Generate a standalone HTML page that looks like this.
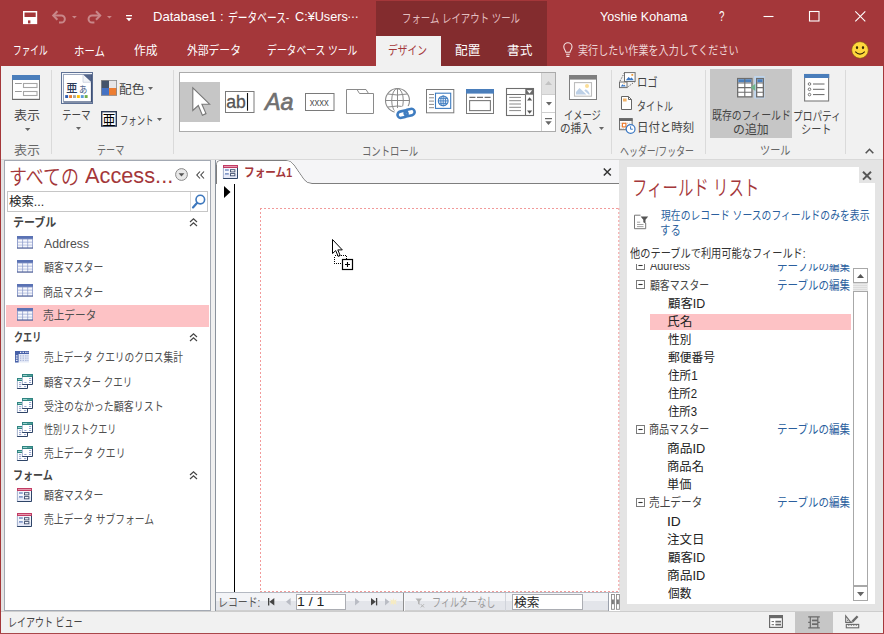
<!DOCTYPE html><html lang="ja"><head><meta charset="utf-8"><title>Access - フォーム1</title><style>
*{box-sizing:border-box;margin:0;padding:0}
html,body{width:884px;height:634px;overflow:hidden;background:#E4E4E4}
body{font-family:"Liberation Sans","Noto Sans CJK JP",sans-serif;font-size:12px;color:#444}
#app{position:relative;width:884px;height:634px;overflow:hidden;background:#E4E4E4}
.a{position:absolute}
.t{position:absolute;white-space:nowrap;transform-origin:0 50%;display:inline-block}
svg{position:absolute;overflow:visible}
#tree{position:absolute;left:627px;top:264px;width:248px;height:340px;overflow:hidden}
</style></head><body><div id="app"><div class="a" style="left:0px;top:0px;width:884px;height:66px;background:#A4373A;"></div><div class="a" style="left:376px;top:1px;width:171px;height:65px;background:#832C2E;"></div><div class="a" style="left:376px;top:36px;width:65px;height:30px;background:#F1F1F1;"></div><svg style="left:23px;top:11px" width="14" height="13" viewBox="0 0 14 13"><rect x="0.75" y="0.75" width="12.7" height="11.6" fill="none" stroke="#fff" stroke-width="1.5"/><rect x="1" y="6" width="12.2" height="6.6" fill="#fff"/><rect x="5" y="9.4" width="2.4" height="3" fill="#A4373A"/></svg><svg style="left:52px;top:11.2px" width="15" height="13" viewBox="0 0 15 13"><path d="M1.2 4.5H9.3A3.55 3.55 0 0 1 9.3 11.6H7" fill="none" stroke="#C98789" stroke-width="2"/><path d="M5.4 0.2L1.2 4.5L5.4 8.8" fill="none" stroke="#C98789" stroke-width="2"/></svg><svg style="left:72.2px;top:16.3px" width="4.8" height="2.6" viewBox="0 0 4.8 2.6"><path d="M0 0H4.8L2.4 2.6Z" fill="#C98789"/></svg><svg style="left:87px;top:11.2px" width="15" height="13" viewBox="0 0 15 13"><path d="M13.2 4.5H5.1A3.55 3.55 0 0 0 5.1 11.6H7.4" fill="none" stroke="#C98789" stroke-width="2"/><path d="M9 0.2L13.2 4.5L9 8.8" fill="none" stroke="#C98789" stroke-width="2"/></svg><svg style="left:107.2px;top:16.3px" width="4.8" height="2.6" viewBox="0 0 4.8 2.6"><path d="M0 0H4.8L2.4 2.6Z" fill="#C98789"/></svg><svg style="left:125.5px;top:15px" width="6" height="6.5" viewBox="0 0 6 6.5"><rect x="0" y="0" width="6" height="1.3" fill="#fff"/><path d="M0 3H6L3 6.2Z" fill="#fff"/></svg><svg style="left:763px;top:11px" width="110" height="12" viewBox="0 0 110 12"><path d="M0.5 5.5H10.5" stroke="#fff" stroke-width="1.1"/><rect x="46.5" y="0.5" width="9.5" height="9.5" fill="none" stroke="#fff" stroke-width="1.1"/><path d="M92.3 0.3L102.3 10.3M102.3 0.3L92.3 10.3" stroke="#fff" stroke-width="1.1"/></svg><svg style="left:563px;top:42px" width="10" height="16" viewBox="0 0 10 16"><path d="M2.8 10.2C2.8 8.6 0.8 7.6 0.8 4.8A4.1 4.1 0 0 1 9 4.8C9 7.6 7 8.6 7 10.2Z" fill="none" stroke="#F3E1E1" stroke-width="1.1"/><path d="M3 12.3H6.8M3.4 14.4H6.4" stroke="#F3E1E1" stroke-width="1.1"/></svg><svg style="left:851px;top:41px" width="18" height="18" viewBox="0 0 18 18"><circle cx="9" cy="9" r="8.3" fill="#FFD83D" stroke="#7a5a10" stroke-width="0.6"/><ellipse cx="6" cy="6.6" rx="1.1" ry="1.7" fill="#3a2a08"/><ellipse cx="12" cy="6.6" rx="1.1" ry="1.7" fill="#3a2a08"/><path d="M4.2 10.6Q9 15.6 13.8 10.6" fill="none" stroke="#3a2a08" stroke-width="1.1"/></svg><div class="a" style="left:0px;top:66px;width:884px;height:94px;background:#F1F1F1;border-bottom:1px solid #D9D9D9"></div><div class="a" style="left:51px;top:70px;width:1px;height:84px;background:#DADADA;"></div><div class="a" style="left:173px;top:70px;width:1px;height:84px;background:#DADADA;"></div><div class="a" style="left:611px;top:70px;width:1px;height:84px;background:#DADADA;"></div><div class="a" style="left:705px;top:70px;width:1px;height:84px;background:#DADADA;"></div><div class="a" style="left:845px;top:70px;width:1px;height:84px;background:#DADADA;"></div><svg style="left:12px;top:75px" width="28" height="25" viewBox="0 0 28 25"><rect x="0.5" y="0.5" width="27" height="24" fill="#fff" stroke="#7E7E7E"/><path d="M0.3 24.4H27.7" stroke="#6A6A6A" stroke-width="1.2"/><rect x="0" y="0" width="28" height="5" fill="#4A7EBB"/><path d="M3 8.5H9.8M3 16.5H9.8" stroke="#9A9A9A"/><rect x="11.5" y="8.5" width="13.5" height="4" fill="#fff" stroke="#A6A6A6" stroke-width="1.1"/><rect x="11.5" y="16.5" width="13.5" height="4" fill="#fff" stroke="#A6A6A6" stroke-width="1.1"/></svg><svg style="left:25px;top:128.1px" width="5.4" height="3.1" viewBox="0 0 5.4 3.1"><path d="M0 0H5.4L2.7 3.1Z" fill="#666"/></svg><svg style="left:61px;top:72px" width="32" height="32" viewBox="0 0 32 32"><rect x="0.5" y="0.5" width="31" height="31" fill="#F4F7FB" stroke="#5F7296"/><rect x="2.5" y="2.5" width="28" height="27.5" fill="#fff" stroke="#9AA6BC"/><path d="M30.5 2.5V30H2.8" fill="none" stroke="#3F5075" stroke-width="1.2"/><path d="M22 2.5H30.5V10.5Z" fill="#53658A"/><path d="M22 2.8V10.3H30" fill="#F2F4F8" stroke="#B9C2D3" stroke-width="0.6"/><text x="5.2" y="20.3" font-size="11.5" font-weight="500" fill="#2B3A57" font-family='"Liberation Sans","Noto Sans CJK JP",sans-serif' textLength="11.2" lengthAdjust="spacingAndGlyphs">亜</text><text x="18" y="20.5" font-size="9" fill="#3C557F" font-family='"Liberation Sans","Noto Sans CJK JP",sans-serif' textLength="8.3" lengthAdjust="spacingAndGlyphs">あ</text><rect x="4.2" y="23.1" width="2.9" height="2.9" fill="#2F5CB0"/><rect x="8.1" y="23.1" width="2.9" height="2.9" fill="#ED7D31"/><rect x="12" y="23.1" width="2.9" height="2.9" fill="#A5A5A5"/><rect x="15.9" y="23.1" width="2.9" height="2.9" fill="#FFC000"/><rect x="19.8" y="23.1" width="2.9" height="2.9" fill="#5B9BD5"/><rect x="23.7" y="23.1" width="2.9" height="2.9" fill="#70AD47"/></svg><svg style="left:76px;top:127.2px" width="5" height="3" viewBox="0 0 5 3"><path d="M0 0H5L2.5 3Z" fill="#666"/></svg><svg style="left:101px;top:80px" width="16" height="16" viewBox="0 0 16 16"><rect x="0" y="0" width="8" height="8" fill="#44546A"/><rect x="8" y="0" width="8" height="8" fill="#E7E6E6"/><rect x="0" y="8" width="8" height="7.6" fill="#4472C4"/><rect x="8" y="8" width="8" height="7.6" fill="#ED7D31"/><rect x="0.4" y="0.4" width="15.2" height="14.9" fill="none" stroke="#8A8A8A" stroke-width="0.8"/></svg><svg style="left:148.3px;top:87px" width="5" height="3" viewBox="0 0 5 3"><path d="M0 0H5L2.5 3Z" fill="#666"/></svg><svg style="left:101px;top:111px" width="16" height="16" viewBox="0 0 16 16"><rect x="0.7" y="0.7" width="14.6" height="14.4" fill="#fff" stroke="#2B3A57" stroke-width="1.4"/><text x="1.6" y="13.6" font-size="13.5" fill="#000" font-family='"Liberation Sans","Noto Sans CJK JP",sans-serif' textLength="13" lengthAdjust="spacingAndGlyphs">亜</text></svg><svg style="left:157.3px;top:117.7px" width="5" height="3" viewBox="0 0 5 3"><path d="M0 0H5L2.5 3Z" fill="#666"/></svg><div class="a" style="left:179px;top:72px;width:377px;height:60px;background:#fff;border:1px solid #ABABAB"></div><div class="a" style="left:180px;top:82px;width:40px;height:40px;background:#C6C6C6;"></div><div class="a" style="left:542px;top:73px;width:13px;height:21px;background:#E1E1E1;"></div><div class="a" style="left:541px;top:73px;width:1px;height:58px;background:#CFCFCF;"></div><div class="a" style="left:542px;top:94px;width:13px;height:1px;background:#CFCFCF;"></div><div class="a" style="left:542px;top:112px;width:13px;height:1px;background:#CFCFCF;"></div><svg style="left:545px;top:81px" width="7" height="4" viewBox="0 0 7 4"><path d="M0 4H7L3.5 0Z" fill="#C2C2C2"/></svg><svg style="left:545.5px;top:102px" width="6" height="3.5" viewBox="0 0 6 3.5"><path d="M0 0H6L3.0 3.5Z" fill="#666"/></svg><svg style="left:545px;top:118px" width="7" height="8" viewBox="0 0 7 8"><rect x="0" y="0" width="7" height="1.2" fill="#666"/><path d="M0.3 3.2H6.7L3.5 7Z" fill="#666"/></svg><svg style="left:192px;top:87px" width="19" height="30" viewBox="0 0 19 30"><path d="M0.8 0.8V23.4L6.3 18.5L10.4 28.2L14 26.6L9.9 17.2H17.6Z" fill="#fff" stroke="#777" stroke-width="1.1" stroke-linejoin="miter"/></svg><svg style="left:225px;top:91px" width="30" height="22" viewBox="0 0 30 22"><rect x="0.5" y="0.5" width="28.5" height="21" fill="#fff" stroke="#7A7A7A"/><text x="1.3" y="17.3" font-size="19" fill="#555" stroke="#555" stroke-width="0.3" font-family='"Liberation Sans",sans-serif' textLength="19.6" lengthAdjust="spacingAndGlyphs">ab</text><path d="M22.5 2V19.7" stroke="#111" stroke-width="1.1"/></svg><svg style="left:265px;top:90px" width="30" height="24" viewBox="0 0 30 24"><text x="0" y="20.4" font-size="24.3" font-style="italic" fill="#707070" stroke="#707070" stroke-width="0.7" font-family='"Liberation Sans",sans-serif' textLength="28.5" lengthAdjust="spacingAndGlyphs">Aa</text></svg><svg style="left:305px;top:93px" width="30" height="19" viewBox="0 0 30 19"><rect x="0.5" y="0.5" width="28.5" height="17" fill="#fff" stroke="#7A7A7A"/><text x="4.7" y="12.6" font-size="10" fill="#555" font-family='"Liberation Sans",sans-serif' textLength="19" lengthAdjust="spacingAndGlyphs">xxxx</text></svg><svg style="left:346px;top:89px" width="29" height="26" viewBox="0 0 29 26"><path d="M0.5 24.5V0.5H11L13.5 4.5H27.5V24.5Z" fill="#fff" stroke="#8A8A8A"/><path d="M11 0.5H20L22.5 4.5" fill="none" stroke="#8A8A8A"/></svg><svg style="left:385px;top:88px" width="32" height="31" viewBox="0 0 32 31"><circle cx="12.5" cy="12.5" r="12" fill="#fff" stroke="#8A8A8A" stroke-width="1.1"/><ellipse cx="12.5" cy="12.5" rx="5.8" ry="12" fill="none" stroke="#8A8A8A" stroke-width="1"/><path d="M12.5 0.5V24.5M0.5 12.5H24.5M2.8 6Q12.5 8 22.2 6M2.8 19Q12.5 17 22.2 19" stroke="#8A8A8A" stroke-width="1" fill="none"/><path d="M9.5 21L20 17.5L32 20V31H9.5Z" fill="#fff"/><g transform="rotate(-14 21 25.3)"><rect x="12.3" y="22.2" width="10.2" height="6.4" rx="3.2" fill="none" stroke="#3E7CC0" stroke-width="2.6"/><rect x="19.6" y="22.2" width="10.2" height="6.4" rx="3.2" fill="none" stroke="#3E7CC0" stroke-width="2.6"/></g></svg><svg style="left:426px;top:89px" width="29" height="25" viewBox="0 0 29 25"><rect x="0.5" y="0.5" width="27.3" height="23.3" fill="#fff" stroke="#7A7A7A"/><path d="M3 5.5H8M3 8.8H8M3 12.1H8M3 15.4H8M3 18.7H8" stroke="#8A8A8A"/><rect x="9.5" y="4.2" width="15.2" height="15.2" fill="#fff" stroke="#3E7CC0" stroke-width="1.1"/><circle cx="17.2" cy="11.9" r="4.9" fill="#EAF1FA" stroke="#3E7CC0" stroke-width="1.1"/><path d="M17.2 7V16.8M12.3 11.9H22.1M13.2 9.4H21.2M13.2 14.4H21.2" stroke="#3E7CC0" stroke-width="0.9" fill="none"/><ellipse cx="17.2" cy="11.9" rx="2.4" ry="4.9" fill="none" stroke="#3E7CC0" stroke-width="0.9"/></svg><svg style="left:466px;top:89px" width="28" height="25" viewBox="0 0 28 25"><rect x="0.5" y="0.5" width="27" height="24" fill="#fff" stroke="#7A7A7A"/><rect x="0" y="0" width="28" height="4.6" fill="#4A7EBB"/><path d="M3.4 8.4H9.4M11 8.4H17M18.6 8.4H24.6" stroke="#6E6E6E" stroke-width="1.3"/><rect x="3.6" y="11.6" width="20.8" height="10" fill="#fff" stroke="#7A7A7A" stroke-width="1.1"/></svg><svg style="left:506px;top:88px" width="28" height="28" viewBox="0 0 28 28"><rect x="0.5" y="0.5" width="27" height="27" fill="#fff" stroke="#6E6E6E" stroke-width="1.1"/><path d="M0.5 6.5H19.5" stroke="#6E6E6E"/><rect x="19.3" y="0.3" width="8.4" height="6.4" fill="#6A6A6A"/><path d="M20.8 2.2H26.2L23.5 5.4Z" fill="#fff"/><path d="M19.5 6.5V27.5" stroke="#6E6E6E" stroke-width="1.1"/><path d="M3.2 9.4H15M3.2 12.7H15M3.2 16H15M3.2 19.3H15M3.2 22.6H15" stroke="#8A8A8A" stroke-width="1"/><path d="M21 12.4H26.2L23.6 9.2Z M21 22.6H26.2L23.6 25.8Z" fill="#555"/></svg><svg style="left:569px;top:75px" width="28" height="25" viewBox="0 0 28 25"><rect x="0.5" y="0.5" width="27" height="24" fill="#fff" stroke="#7E7E7E"/><rect x="0" y="0" width="28" height="4.6" fill="#7F7F7F"/><rect x="5.5" y="7.6" width="17" height="13.6" fill="#fff" stroke="#BDBDBD" stroke-width="1.1"/><path d="M7 19.6V17L10.5 13L17.5 19.6Z" fill="#BDD0E6"/><path d="M15.3 15.5L16.8 14.2Q20.5 16.5 20.8 19.6H19.6Z" fill="#BDD0E6"/><circle cx="18" cy="11" r="2" fill="#FBDD96"/></svg><svg style="left:598.5px;top:127px" width="5" height="3" viewBox="0 0 5 3"><path d="M0 0H5L2.5 3Z" fill="#666"/></svg><svg style="left:619px;top:72px" width="17" height="16.5" viewBox="0 0 17 16.5"><path d="M5.5 0.6L0.5 10M16.1 9.4L8 15.6" fill="none" stroke="#666" stroke-dasharray="1.4 1.3" stroke-width="1"/><rect x="5.5" y="0.6" width="10.6" height="8.9" fill="#fff" stroke="#6E6E6E"/><path d="M6.8 8.3L9.6 4.9L11.3 6.6L12.6 5.5L14.9 8.3Z" fill="#3B78C3"/><rect x="12.4" y="2" width="1.8" height="1.8" fill="#ED9B3A"/><rect x="0.5" y="10" width="7.5" height="5.6" fill="#fff" stroke="#6E6E6E"/><path d="M1.6 14.4L3.6 12.2L4.8 13.4L5.6 12.8L6.8 14.4Z" fill="#3B78C3"/><rect x="4.6" y="11.2" width="1" height="1" fill="#ED9B3A"/></svg><svg style="left:621px;top:96px" width="12" height="14.5" viewBox="0 0 12 14.5"><path d="M0.5 0.5H7.5L10.5 3.5V13.5H0.5Z" fill="#fff" stroke="#666"/><path d="M7.5 0.5V3.5H10.5" fill="none" stroke="#666"/><rect x="2" y="2.5" width="3.6" height="3" fill="#F0B36A"/></svg><svg style="left:619px;top:118px" width="17" height="17" viewBox="0 0 17 17"><rect x="0.5" y="0.7" width="12.6" height="11" fill="#fff" stroke="#6E6E6E"/><rect x="0" y="0.2" width="13.6" height="2.8" fill="#666"/><path d="M1.5 5.2H12M1.5 8H12M1.5 10.4H8" stroke="#B0B0B0" stroke-dasharray="1 1.2" stroke-width="0.9"/><rect x="3.4" y="5.3" width="3.5" height="3.6" fill="#fff" stroke="#ED7D31" stroke-width="1.2"/><circle cx="11.6" cy="11" r="4.4" fill="#fff" stroke="#3B78C3" stroke-width="1.2"/><path d="M11.6 8.3V11.2H13.8" fill="none" stroke="#3B78C3" stroke-width="1"/></svg><div class="a" style="left:710px;top:69px;width:82px;height:69px;background:#C6C6C6;"></div><svg style="left:737px;top:76px" width="28" height="23" viewBox="0 0 28 23"><rect x="17.2" y="0.1" width="10.4" height="22.4" fill="#BFD6EF"/><rect x="0.65" y="2.55" width="14.3" height="18.3" fill="#fff" stroke="#6E6E6E" stroke-width="1.3"/><rect x="1.3" y="3.2" width="13" height="3.2" fill="#4A7EBB"/><path d="M0.65 7H14.95M0.65 11.6H14.95M0.65 16.2H14.95M7.8 2.6V20.8" stroke="#6E6E6E" stroke-width="1.1" fill="none"/><rect x="19.65" y="2.55" width="6.7" height="18.3" fill="#fff" stroke="#6E6E6E" stroke-width="1.3"/><rect x="20.3" y="3.2" width="5.4" height="3.2" fill="#4A7EBB"/><path d="M19.65 7H26.35M19.65 11.6H26.35M19.65 16.2H26.35" stroke="#6E6E6E" stroke-width="1.1"/><path d="M13.7 11.4L18.3 7.8V15Z" fill="#6FB58B"/></svg><svg style="left:804px;top:74px" width="26" height="28" viewBox="0 0 26 28"><rect x="0.6" y="0.5" width="24" height="26.5" fill="#fff" stroke="#7A7A7A" stroke-width="1.1"/><rect x="0" y="0" width="25.2" height="4" fill="#4A7EBB"/><circle cx="5.5" cy="10" r="1.3" fill="none" stroke="#666" stroke-width="0.9"/><circle cx="5.5" cy="15.3" r="1.3" fill="none" stroke="#666" stroke-width="0.9"/><circle cx="5.5" cy="20.6" r="1.3" fill="none" stroke="#666" stroke-width="0.9"/><path d="M9 10H20.5M9 15.3H20.5M9 20.6H20.5" stroke="#666" stroke-width="1"/></svg><svg style="left:864.5px;top:148px" width="9" height="6" viewBox="0 0 9 6"><path d="M0.7 5.3L4.5 1.3L8.3 5.3" fill="none" stroke="#555" stroke-width="1.6"/></svg><div class="a" style="left:4px;top:160px;width:207px;height:451px;background:#fff;border:1px solid #A3A9B3"></div><div class="a" style="left:211px;top:160px;width:4px;height:451px;background:#F0F0F0;"></div><div class="a" style="left:6px;top:305px;width:203px;height:22px;background:#FDC2C5;"></div><div class="a" style="left:7px;top:191px;width:201px;height:21px;background:#fff;border:1px solid #C6C6C6"></div><div class="a" style="left:190px;top:192px;width:1px;height:19px;background:#D9D9D9;"></div><svg style="left:175px;top:168px" width="13" height="13" viewBox="0 0 13 13"><circle cx="6.5" cy="6.5" r="5.9" fill="#E8E8E8" stroke="#8A8A8A" stroke-width="1"/><path d="M3.6 5.2H9.4L6.5 8.6Z" fill="#555"/></svg><svg style="left:196px;top:171px" width="9" height="8" viewBox="0 0 9 8"><path d="M4 0.5L0.8 4L4 7.5M8 0.5L4.8 4L8 7.5" fill="none" stroke="#444" stroke-width="1.1"/></svg><svg style="left:192px;top:194px" width="14" height="15" viewBox="0 0 14 15"><circle cx="8.3" cy="5.6" r="4.3" fill="#fff" stroke="#3E78BD" stroke-width="1.6"/><path d="M5.2 8.8L1 13.4" stroke="#3E78BD" stroke-width="2.2" stroke-linecap="round"/></svg><svg style="left:189px;top:218px" width="9" height="9" viewBox="0 0 9 9"><path d="M1 4L4.5 0.8L8 4M1 8L4.5 4.8L8 8" stroke="#444" stroke-width="1.2" fill="none"/></svg><svg style="left:189px;top:332.5px" width="9" height="9" viewBox="0 0 9 9"><path d="M1 4L4.5 0.8L8 4M1 8L4.5 4.8L8 8" stroke="#444" stroke-width="1.2" fill="none"/></svg><svg style="left:189px;top:471px" width="9" height="9" viewBox="0 0 9 9"><path d="M1 4L4.5 0.8L8 4M1 8L4.5 4.8L8 8" stroke="#444" stroke-width="1.2" fill="none"/></svg><svg style="left:17px;top:236.1px" width="16" height="13" viewBox="0 0 16 13"><rect x="0" y="0" width="16" height="12.4" fill="#93A1CE"/><rect x="0" y="0" width="16" height="2.7" fill="#5A72B4"/><rect x="1" y="3.5" width="4.2" height="2.1" fill="#fff"/><rect x="1" y="4.7" width="4.2" height="0.9" fill="#E3E8F6"/><rect x="1" y="6.5" width="4.2" height="2.1" fill="#fff"/><rect x="1" y="7.7" width="4.2" height="0.9" fill="#E3E8F6"/><rect x="1" y="9.4" width="4.2" height="2.1" fill="#fff"/><rect x="1" y="10.6" width="4.2" height="0.9" fill="#E3E8F6"/><rect x="6.1" y="3.5" width="4.2" height="2.1" fill="#fff"/><rect x="6.1" y="4.7" width="4.2" height="0.9" fill="#E3E8F6"/><rect x="6.1" y="6.5" width="4.2" height="2.1" fill="#fff"/><rect x="6.1" y="7.7" width="4.2" height="0.9" fill="#E3E8F6"/><rect x="6.1" y="9.4" width="4.2" height="2.1" fill="#fff"/><rect x="6.1" y="10.6" width="4.2" height="0.9" fill="#E3E8F6"/><rect x="11.2" y="3.5" width="3.9" height="2.1" fill="#fff"/><rect x="11.2" y="4.7" width="3.9" height="0.9" fill="#E3E8F6"/><rect x="11.2" y="6.5" width="3.9" height="2.1" fill="#fff"/><rect x="11.2" y="7.7" width="3.9" height="0.9" fill="#E3E8F6"/><rect x="11.2" y="9.4" width="3.9" height="2.1" fill="#fff"/><rect x="11.2" y="10.6" width="3.9" height="0.9" fill="#E3E8F6"/><rect x="0" y="11.6" width="16" height="0.9" fill="#3A4D86"/></svg><svg style="left:17px;top:260.1px" width="16" height="13" viewBox="0 0 16 13"><rect x="0" y="0" width="16" height="12.4" fill="#93A1CE"/><rect x="0" y="0" width="16" height="2.7" fill="#5A72B4"/><rect x="1" y="3.5" width="4.2" height="2.1" fill="#fff"/><rect x="1" y="4.7" width="4.2" height="0.9" fill="#E3E8F6"/><rect x="1" y="6.5" width="4.2" height="2.1" fill="#fff"/><rect x="1" y="7.7" width="4.2" height="0.9" fill="#E3E8F6"/><rect x="1" y="9.4" width="4.2" height="2.1" fill="#fff"/><rect x="1" y="10.6" width="4.2" height="0.9" fill="#E3E8F6"/><rect x="6.1" y="3.5" width="4.2" height="2.1" fill="#fff"/><rect x="6.1" y="4.7" width="4.2" height="0.9" fill="#E3E8F6"/><rect x="6.1" y="6.5" width="4.2" height="2.1" fill="#fff"/><rect x="6.1" y="7.7" width="4.2" height="0.9" fill="#E3E8F6"/><rect x="6.1" y="9.4" width="4.2" height="2.1" fill="#fff"/><rect x="6.1" y="10.6" width="4.2" height="0.9" fill="#E3E8F6"/><rect x="11.2" y="3.5" width="3.9" height="2.1" fill="#fff"/><rect x="11.2" y="4.7" width="3.9" height="0.9" fill="#E3E8F6"/><rect x="11.2" y="6.5" width="3.9" height="2.1" fill="#fff"/><rect x="11.2" y="7.7" width="3.9" height="0.9" fill="#E3E8F6"/><rect x="11.2" y="9.4" width="3.9" height="2.1" fill="#fff"/><rect x="11.2" y="10.6" width="3.9" height="0.9" fill="#E3E8F6"/><rect x="0" y="11.6" width="16" height="0.9" fill="#3A4D86"/></svg><svg style="left:17px;top:284.1px" width="16" height="13" viewBox="0 0 16 13"><rect x="0" y="0" width="16" height="12.4" fill="#93A1CE"/><rect x="0" y="0" width="16" height="2.7" fill="#5A72B4"/><rect x="1" y="3.5" width="4.2" height="2.1" fill="#fff"/><rect x="1" y="4.7" width="4.2" height="0.9" fill="#E3E8F6"/><rect x="1" y="6.5" width="4.2" height="2.1" fill="#fff"/><rect x="1" y="7.7" width="4.2" height="0.9" fill="#E3E8F6"/><rect x="1" y="9.4" width="4.2" height="2.1" fill="#fff"/><rect x="1" y="10.6" width="4.2" height="0.9" fill="#E3E8F6"/><rect x="6.1" y="3.5" width="4.2" height="2.1" fill="#fff"/><rect x="6.1" y="4.7" width="4.2" height="0.9" fill="#E3E8F6"/><rect x="6.1" y="6.5" width="4.2" height="2.1" fill="#fff"/><rect x="6.1" y="7.7" width="4.2" height="0.9" fill="#E3E8F6"/><rect x="6.1" y="9.4" width="4.2" height="2.1" fill="#fff"/><rect x="6.1" y="10.6" width="4.2" height="0.9" fill="#E3E8F6"/><rect x="11.2" y="3.5" width="3.9" height="2.1" fill="#fff"/><rect x="11.2" y="4.7" width="3.9" height="0.9" fill="#E3E8F6"/><rect x="11.2" y="6.5" width="3.9" height="2.1" fill="#fff"/><rect x="11.2" y="7.7" width="3.9" height="0.9" fill="#E3E8F6"/><rect x="11.2" y="9.4" width="3.9" height="2.1" fill="#fff"/><rect x="11.2" y="10.6" width="3.9" height="0.9" fill="#E3E8F6"/><rect x="0" y="11.6" width="16" height="0.9" fill="#3A4D86"/></svg><svg style="left:17px;top:308.1px" width="16" height="13" viewBox="0 0 16 13"><rect x="0" y="0" width="16" height="12.4" fill="#93A1CE"/><rect x="0" y="0" width="16" height="2.7" fill="#5A72B4"/><rect x="1" y="3.5" width="4.2" height="2.1" fill="#fff"/><rect x="1" y="4.7" width="4.2" height="0.9" fill="#E3E8F6"/><rect x="1" y="6.5" width="4.2" height="2.1" fill="#fff"/><rect x="1" y="7.7" width="4.2" height="0.9" fill="#E3E8F6"/><rect x="1" y="9.4" width="4.2" height="2.1" fill="#fff"/><rect x="1" y="10.6" width="4.2" height="0.9" fill="#E3E8F6"/><rect x="6.1" y="3.5" width="4.2" height="2.1" fill="#fff"/><rect x="6.1" y="4.7" width="4.2" height="0.9" fill="#E3E8F6"/><rect x="6.1" y="6.5" width="4.2" height="2.1" fill="#fff"/><rect x="6.1" y="7.7" width="4.2" height="0.9" fill="#E3E8F6"/><rect x="6.1" y="9.4" width="4.2" height="2.1" fill="#fff"/><rect x="6.1" y="10.6" width="4.2" height="0.9" fill="#E3E8F6"/><rect x="11.2" y="3.5" width="3.9" height="2.1" fill="#fff"/><rect x="11.2" y="4.7" width="3.9" height="0.9" fill="#E3E8F6"/><rect x="11.2" y="6.5" width="3.9" height="2.1" fill="#fff"/><rect x="11.2" y="7.7" width="3.9" height="0.9" fill="#E3E8F6"/><rect x="11.2" y="9.4" width="3.9" height="2.1" fill="#fff"/><rect x="11.2" y="10.6" width="3.9" height="0.9" fill="#E3E8F6"/><rect x="0" y="11.6" width="16" height="0.9" fill="#3A4D86"/></svg><svg style="left:15px;top:351.3px" width="14" height="12" viewBox="0 0 14 12"><rect x="0" y="0" width="14" height="11.5" fill="#E4E9F6"/><rect x="0" y="0" width="14" height="3" fill="#4660A8"/><rect x="0" y="0" width="3.6" height="11.5" fill="#4660A8"/><path d="M5 1.4H6.3M7.6 1.4H8.9M10.2 1.4H11.5M12.4 1.4H13.4M0.9 4.8H2.6M0.9 7.1H2.6M0.9 9.4H2.6" stroke="#E8ECF8" stroke-width="1.2"/><path d="M5 4.8H6.3M7.6 4.8H8.9M10.2 4.8H11.5M5 7.1H6.3M7.6 7.1H8.9M10.2 7.1H11.5M5 9.4H6.3M7.6 9.4H8.9M10.2 9.4H11.5M12.4 4.8H13.4M12.4 7.1H13.4M12.4 9.4H13.4" stroke="#A9B6DA" stroke-width="1.2"/></svg><svg style="left:17px;top:374px" width="16" height="15" viewBox="0 0 16 15"><rect x="0" y="4" width="11" height="11" fill="#fff"/><rect x="0" y="4" width="11" height="3" fill="#2F8481"/><rect x="1" y="5" width="4.2" height="0.9" fill="#A6DDD7"/><rect x="5.2" y="5" width="4.5" height="0.9" fill="#5FA9A4"/><path d="M0.4 7V15" stroke="#8FA0C0" stroke-width="0.8"/><path d="M10.5 6.5V14.5H0.2" fill="none" stroke="#2E4467" stroke-width="1"/><rect x="2" y="8.2" width="2.2" height="0.9" fill="#8C9CCB"/><rect x="2" y="10.2" width="2.2" height="0.9" fill="#8C9CCB"/><rect x="2" y="12.2" width="2.2" height="0.9" fill="#8C9CCB"/><rect x="7" y="8.2" width="2.2" height="0.9" fill="#8C9CCB"/><rect x="7" y="12.2" width="2.2" height="0.9" fill="#8C9CCB"/><rect x="5" y="0" width="11" height="11" fill="#fff"/><rect x="5" y="0" width="11" height="3" fill="#2F8481"/><rect x="6" y="1" width="4.2" height="0.9" fill="#A6DDD7"/><rect x="10.2" y="1" width="4.5" height="0.9" fill="#5FA9A4"/><path d="M5.4 3V11" stroke="#8FA0C0" stroke-width="0.8"/><path d="M15.5 2.5V10.5H5.2" fill="none" stroke="#2E4467" stroke-width="1"/><rect x="12" y="4" width="2.2" height="0.9" fill="#8C9CCB"/><rect x="12" y="6" width="2.2" height="0.9" fill="#8C9CCB"/><rect x="12" y="8" width="2.2" height="0.9" fill="#8C9CCB"/><rect x="7.3" y="8" width="2.2" height="0.9" fill="#8C9CCB"/></svg><svg style="left:17px;top:398px" width="16" height="15" viewBox="0 0 16 15"><rect x="0" y="4" width="11" height="11" fill="#fff"/><rect x="0" y="4" width="11" height="3" fill="#2F8481"/><rect x="1" y="5" width="4.2" height="0.9" fill="#A6DDD7"/><rect x="5.2" y="5" width="4.5" height="0.9" fill="#5FA9A4"/><path d="M0.4 7V15" stroke="#8FA0C0" stroke-width="0.8"/><path d="M10.5 6.5V14.5H0.2" fill="none" stroke="#2E4467" stroke-width="1"/><rect x="2" y="8.2" width="2.2" height="0.9" fill="#8C9CCB"/><rect x="2" y="10.2" width="2.2" height="0.9" fill="#8C9CCB"/><rect x="2" y="12.2" width="2.2" height="0.9" fill="#8C9CCB"/><rect x="7" y="8.2" width="2.2" height="0.9" fill="#8C9CCB"/><rect x="7" y="12.2" width="2.2" height="0.9" fill="#8C9CCB"/><rect x="5" y="0" width="11" height="11" fill="#fff"/><rect x="5" y="0" width="11" height="3" fill="#2F8481"/><rect x="6" y="1" width="4.2" height="0.9" fill="#A6DDD7"/><rect x="10.2" y="1" width="4.5" height="0.9" fill="#5FA9A4"/><path d="M5.4 3V11" stroke="#8FA0C0" stroke-width="0.8"/><path d="M15.5 2.5V10.5H5.2" fill="none" stroke="#2E4467" stroke-width="1"/><rect x="12" y="4" width="2.2" height="0.9" fill="#8C9CCB"/><rect x="12" y="6" width="2.2" height="0.9" fill="#8C9CCB"/><rect x="12" y="8" width="2.2" height="0.9" fill="#8C9CCB"/><rect x="7.3" y="8" width="2.2" height="0.9" fill="#8C9CCB"/></svg><svg style="left:17px;top:422px" width="16" height="15" viewBox="0 0 16 15"><rect x="0" y="4" width="11" height="11" fill="#fff"/><rect x="0" y="4" width="11" height="3" fill="#2F8481"/><rect x="1" y="5" width="4.2" height="0.9" fill="#A6DDD7"/><rect x="5.2" y="5" width="4.5" height="0.9" fill="#5FA9A4"/><path d="M0.4 7V15" stroke="#8FA0C0" stroke-width="0.8"/><path d="M10.5 6.5V14.5H0.2" fill="none" stroke="#2E4467" stroke-width="1"/><rect x="2" y="8.2" width="2.2" height="0.9" fill="#8C9CCB"/><rect x="2" y="10.2" width="2.2" height="0.9" fill="#8C9CCB"/><rect x="2" y="12.2" width="2.2" height="0.9" fill="#8C9CCB"/><rect x="7" y="8.2" width="2.2" height="0.9" fill="#8C9CCB"/><rect x="7" y="12.2" width="2.2" height="0.9" fill="#8C9CCB"/><rect x="5" y="0" width="11" height="11" fill="#fff"/><rect x="5" y="0" width="11" height="3" fill="#2F8481"/><rect x="6" y="1" width="4.2" height="0.9" fill="#A6DDD7"/><rect x="10.2" y="1" width="4.5" height="0.9" fill="#5FA9A4"/><path d="M5.4 3V11" stroke="#8FA0C0" stroke-width="0.8"/><path d="M15.5 2.5V10.5H5.2" fill="none" stroke="#2E4467" stroke-width="1"/><rect x="12" y="4" width="2.2" height="0.9" fill="#8C9CCB"/><rect x="12" y="6" width="2.2" height="0.9" fill="#8C9CCB"/><rect x="12" y="8" width="2.2" height="0.9" fill="#8C9CCB"/><rect x="7.3" y="8" width="2.2" height="0.9" fill="#8C9CCB"/></svg><svg style="left:17px;top:446px" width="16" height="15" viewBox="0 0 16 15"><rect x="0" y="4" width="11" height="11" fill="#fff"/><rect x="0" y="4" width="11" height="3" fill="#2F8481"/><rect x="1" y="5" width="4.2" height="0.9" fill="#A6DDD7"/><rect x="5.2" y="5" width="4.5" height="0.9" fill="#5FA9A4"/><path d="M0.4 7V15" stroke="#8FA0C0" stroke-width="0.8"/><path d="M10.5 6.5V14.5H0.2" fill="none" stroke="#2E4467" stroke-width="1"/><rect x="2" y="8.2" width="2.2" height="0.9" fill="#8C9CCB"/><rect x="2" y="10.2" width="2.2" height="0.9" fill="#8C9CCB"/><rect x="2" y="12.2" width="2.2" height="0.9" fill="#8C9CCB"/><rect x="7" y="8.2" width="2.2" height="0.9" fill="#8C9CCB"/><rect x="7" y="12.2" width="2.2" height="0.9" fill="#8C9CCB"/><rect x="5" y="0" width="11" height="11" fill="#fff"/><rect x="5" y="0" width="11" height="3" fill="#2F8481"/><rect x="6" y="1" width="4.2" height="0.9" fill="#A6DDD7"/><rect x="10.2" y="1" width="4.5" height="0.9" fill="#5FA9A4"/><path d="M5.4 3V11" stroke="#8FA0C0" stroke-width="0.8"/><path d="M15.5 2.5V10.5H5.2" fill="none" stroke="#2E4467" stroke-width="1"/><rect x="12" y="4" width="2.2" height="0.9" fill="#8C9CCB"/><rect x="12" y="6" width="2.2" height="0.9" fill="#8C9CCB"/><rect x="12" y="8" width="2.2" height="0.9" fill="#8C9CCB"/><rect x="7.3" y="8" width="2.2" height="0.9" fill="#8C9CCB"/></svg><svg style="left:17px;top:488px" width="15" height="14" viewBox="0 0 15 14"><rect x="0" y="0" width="15" height="14" fill="#F4F6FC"/><rect x="0" y="9" width="15" height="5" fill="#E6EAF8"/><rect x="0" y="0" width="15" height="3" fill="#C23C64"/><rect x="1" y="1" width="13" height="0.9" fill="#EAA3B7"/><path d="M0.4 3V14" stroke="#8FA0C0" stroke-width="0.8"/><path d="M14.5 2.8V13.5H0.2" fill="none" stroke="#2E4467" stroke-width="1"/><path d="M2 5H5.8M2 8.9H5.8" stroke="#3A5FA8" stroke-width="1"/><rect x="7.5" y="4.7" width="4.4" height="2.2" fill="#fff" stroke="#3B4A6B" stroke-width="0.9"/><rect x="7.5" y="8.6" width="4.4" height="2.2" fill="#fff" stroke="#3B4A6B" stroke-width="0.9"/></svg><svg style="left:17px;top:512.5px" width="15" height="14" viewBox="0 0 15 14"><rect x="0" y="0" width="15" height="14" fill="#F4F6FC"/><rect x="0" y="9" width="15" height="5" fill="#E6EAF8"/><rect x="0" y="0" width="15" height="3" fill="#C23C64"/><rect x="1" y="1" width="13" height="0.9" fill="#EAA3B7"/><path d="M0.4 3V14" stroke="#8FA0C0" stroke-width="0.8"/><path d="M14.5 2.8V13.5H0.2" fill="none" stroke="#2E4467" stroke-width="1"/><path d="M2 5H5.8M2 8.9H5.8" stroke="#3A5FA8" stroke-width="1"/><rect x="7.5" y="4.7" width="4.4" height="2.2" fill="#fff" stroke="#3B4A6B" stroke-width="0.9"/><rect x="7.5" y="8.6" width="4.4" height="2.2" fill="#fff" stroke="#3B4A6B" stroke-width="0.9"/></svg><div class="a" style="left:215px;top:160px;width:404px;height:451px;background:#fff;"></div><div class="a" style="left:215px;top:160px;width:404px;height:23px;background:#F5F5F7;"></div><div class="a" style="left:215px;top:160px;width:1px;height:451px;background:#8A929C;"></div><svg style="left:216px;top:160px" width="404" height="24" viewBox="0 0 404 24"><path d="M0.5 24V4.5Q0.5 0.5 4.5 0.5H70Q75 0.5 78 5L88 19.5Q91 23.5 96 23.5H403" fill="none" stroke="#7E7E7E" stroke-width="1"/><path d="M1 24V4.5Q1 1 4.5 1H70Q75 1 77.6 5.3L87.6 19.8Q90.8 24 96 24Z" fill="#fff"/></svg><svg style="left:222.5px;top:165px" width="15" height="14" viewBox="0 0 15 14"><rect x="0" y="0" width="15" height="14" fill="#F4F6FC"/><rect x="0" y="9" width="15" height="5" fill="#E6EAF8"/><rect x="0" y="0" width="15" height="3" fill="#C23C64"/><rect x="1" y="1" width="13" height="0.9" fill="#EAA3B7"/><path d="M0.4 3V14" stroke="#8FA0C0" stroke-width="0.8"/><path d="M14.5 2.8V13.5H0.2" fill="none" stroke="#2E4467" stroke-width="1"/><path d="M2 5H5.8M2 8.9H5.8" stroke="#3A5FA8" stroke-width="1"/><rect x="7.5" y="4.7" width="4.4" height="2.2" fill="#fff" stroke="#3B4A6B" stroke-width="0.9"/><rect x="7.5" y="8.6" width="4.4" height="2.2" fill="#fff" stroke="#3B4A6B" stroke-width="0.9"/></svg><svg style="left:603px;top:168px" width="9" height="8" viewBox="0 0 9 8"><path d="M0.8 0.5L7.8 7.5M7.8 0.5L0.8 7.5" stroke="#333" stroke-width="1.5"/></svg><svg style="left:224px;top:185.5px" width="7" height="12" viewBox="0 0 7 12"><path d="M0 0L6.5 6L0 12Z" fill="#000"/></svg><div class="a" style="left:234px;top:184px;width:1.25px;height:408px;background:#000;"></div><svg style="left:259px;top:208px" width="361" height="384" viewBox="0 0 361 384"><path d="M1 0.5H360" stroke="#F29A9A" stroke-dasharray="2 2" fill="none"/><path d="M1.5 0V384" stroke="#F29A9A" stroke-dasharray="2 2" fill="none"/><path d="M359.8 0V384" stroke="#F29A9A" stroke-dasharray="2 2" fill="none"/><path d="M1 383.5H360" stroke="#F29A9A" stroke-dasharray="2 2" fill="none"/></svg><svg style="left:332px;top:239px" width="22" height="32" viewBox="0 0 22 32"><path d="M0.5 0.5V14.5L3.7 11.6L6.2 17.4L8.2 16.5L5.8 10.9H10.3Z" fill="#fff" stroke="#000" stroke-width="1"/><rect x="2.5" y="16.5" width="12" height="8" fill="none" stroke="#000" stroke-dasharray="1 1" shape-rendering="crispEdges"/><rect x="10.5" y="20.5" width="10" height="10" fill="#fff" stroke="#000" stroke-width="1.2"/><path d="M13 25.5H18M15.5 23V28" stroke="#000" stroke-width="1.1"/></svg><div class="a" style="left:216px;top:592px;width:403px;height:19px;background:linear-gradient(#F3F4F7 0,#F3F4F7 47%,#E3E5EA 47%,#E3E5EA 100%);border-top:1px solid #B4B9C2;border-bottom:1px solid #CFCFCF"></div><svg style="left:268.3px;top:597.7px" width="7" height="7.6" viewBox="0 0 7 7.6"><path d="M0.65 0V7.6" stroke="#444" stroke-width="1.3"/><path d="M6.3 0L1.4 3.8L6.3 7.6Z" fill="#444"/></svg><svg style="left:285.7px;top:597.9px" width="4.6" height="7.4" viewBox="0 0 4.6 7.4"><path d="M4.6 0L0 3.7L4.6 7.4Z" fill="#B9BCC4"/></svg><div class="a" style="left:296px;top:594px;width:50px;height:16px;background:#fff;border:1px solid #ABADB3"></div><svg style="left:355px;top:597.9px" width="4.6" height="7.4" viewBox="0 0 4.6 7.4"><path d="M0 0L4.6 3.7L0 7.4Z" fill="#B9BCC4"/></svg><svg style="left:370.9px;top:597.8px" width="7" height="7.4" viewBox="0 0 7 7.4"><path d="M5.6 0V7.4" stroke="#444" stroke-width="1.3"/><path d="M0 0L4.8 3.7L0 7.4Z" fill="#444"/></svg><svg style="left:385px;top:597.8px" width="13" height="8" viewBox="0 0 13 8"><path d="M0 0.2L4.4 3.8L0 7.4Z" fill="#B9BCC4"/><path d="M8.4 0L9.2 2.6L11.8 1.2L10.6 3.6L12.6 4L10.6 4.6L11.6 7L9.2 5.6L8.4 7.6L7.6 5.6L5.2 7L6.2 4.6L4.4 4L6.2 3.6L5 1.2L7.6 2.6Z" fill="#F6EBC2"/></svg><div class="a" style="left:403px;top:593px;width:1px;height:17.5px;background:#8E8E8E;"></div><div class="a" style="left:404px;top:593px;width:1px;height:17.5px;background:#F8F8FA;"></div><div class="a" style="left:505px;top:593px;width:1px;height:17.5px;background:#D0D3DA;"></div><svg style="left:414.7px;top:598.3px" width="10" height="10" viewBox="0 0 10 10"><path d="M0.5 0.5H7L4.6 3.6V7L3 5.8V3.6Z" fill="#B4B4B4"/><path d="M5.8 6.2L9 9.4M9 6.2L5.8 9.4" stroke="#B4B4B4" stroke-width="1"/></svg><div class="a" style="left:511.5px;top:594px;width:71px;height:16px;background:#fff;border:1px solid #ABADB3"></div><div class="a" style="left:608px;top:593px;width:1px;height:17.5px;background:#9AA0AC;"></div><div class="a" style="left:609px;top:593px;width:10.5px;height:17.5px;background:#fff;"></div><svg style="left:610.5px;top:593.5px" width="9" height="16" viewBox="0 0 9 16"><rect x="0.5" y="0.5" width="2.9" height="14.8" fill="#fff" stroke="#8A8A8A" stroke-width="0.9"/><rect x="5.5" y="0.5" width="2.9" height="14.8" fill="#fff" stroke="#8A8A8A" stroke-width="0.9"/><rect x="1" y="5.5" width="1.9" height="4.7" fill="#7A7A7A"/><rect x="6" y="5.5" width="1.9" height="4.7" fill="#7A7A7A"/></svg><div class="a" style="left:627px;top:167px;width:248px;height:437px;background:#fff;"></div><div class="a" style="left:859px;top:167px;width:16px;height:16px;background:#E4E4E4;"></div><svg style="left:862px;top:171px" width="10" height="9" viewBox="0 0 10 9"><path d="M1 0.8L9 8.6M9 0.8L1 8.6" stroke="#555" stroke-width="2"/></svg><svg style="left:634px;top:213.5px" width="15" height="15.5" viewBox="0 0 15 15.5"><path d="M6.5 1.2H0.5V14.7H11.7V9" fill="none" stroke="#777" stroke-width="1"/><path d="M3 8.2H6.2M3 10.5H9.5M3 12.6H9.5" stroke="#999" stroke-width="0.9"/><path d="M6.6 2.4H14.2L11.5 5.8V9.4L9.3 8.2V5.8Z" fill="#555"/></svg><div id="tree"><div class="a" style="left:23px;top:50px;width:201px;height:16px;background:#FDC2C5;"></div><svg style="left:8.8px;top:-3.2999999999999776px" width="9" height="9" viewBox="0 0 9 9"><rect x="0.5" y="0.5" width="8" height="8" fill="#fff" stroke="#7A7A7A"/><path d="M2.4 4.5H6.6" stroke="#333" stroke-width="1.1"/></svg><svg style="left:8.8px;top:15.799999999999988px" width="9" height="9" viewBox="0 0 9 9"><rect x="0.5" y="0.5" width="8" height="8" fill="#fff" stroke="#7A7A7A"/><path d="M2.4 4.5H6.6" stroke="#333" stroke-width="1.1"/></svg><svg style="left:8.8px;top:160.99999999999997px" width="9" height="9" viewBox="0 0 9 9"><rect x="0.5" y="0.5" width="8" height="8" fill="#fff" stroke="#7A7A7A"/><path d="M2.4 4.5H6.6" stroke="#333" stroke-width="1.1"/></svg><svg style="left:8.8px;top:233.6px" width="9" height="9" viewBox="0 0 9 9"><rect x="0.5" y="0.5" width="8" height="8" fill="#fff" stroke="#7A7A7A"/><path d="M2.4 4.5H6.6" stroke="#333" stroke-width="1.1"/></svg><span class="t" id="t61" style="left:23.00px;top:-6.90px;font-size:12px;line-height:18px;color:#444;font-weight:normal;transform:scaleX(0.9091);">Address</span><span class="t" id="t62" style="left:150.40px;top:-6.40px;font-size:12px;line-height:18px;color:#2B5F9E;font-weight:normal;transform:scaleX(0.8769);">テーブルの編集</span><span class="t" id="t63" style="left:23.40px;top:12.60px;font-size:12px;line-height:18px;color:#444;font-weight:normal;transform:scaleX(0.8226);">顧客マスター</span><span class="t" id="t64" style="left:150.40px;top:12.60px;font-size:12px;line-height:18px;color:#2B5F9E;font-weight:normal;transform:scaleX(0.8769);">テーブルの編集</span><span class="t" id="t65" style="left:40.60px;top:31.40px;font-size:12px;line-height:18px;color:#222;font-weight:normal;transform:scaleX(1.0326);">顧客ID</span><span class="t" id="t66" style="left:39.80px;top:49.00px;font-size:12px;line-height:18px;color:#222;font-weight:normal;transform:scaleX(1.0601);">氏名</span><span class="t" id="t67" style="left:40.80px;top:67.40px;font-size:12px;line-height:18px;color:#222;font-weight:normal;transform:scaleX(0.9700);">性別</span><span class="t" id="t68" style="left:40.80px;top:85.40px;font-size:12px;line-height:18px;color:#222;font-weight:normal;transform:scaleX(0.9792);">郵便番号</span><span class="t" id="t69" style="left:40.80px;top:103.40px;font-size:12px;line-height:18px;color:#222;font-weight:normal;transform:scaleX(0.9667);">住所1</span><span class="t" id="t70" style="left:40.80px;top:121.40px;font-size:12px;line-height:18px;color:#222;font-weight:normal;transform:scaleX(0.9478);">住所2</span><span class="t" id="t71" style="left:40.80px;top:139.40px;font-size:12px;line-height:18px;color:#222;font-weight:normal;transform:scaleX(0.9478);">住所3</span><span class="t" id="t72" style="left:22.40px;top:157.40px;font-size:12px;line-height:18px;color:#444;font-weight:normal;transform:scaleX(0.8371);">商品マスター</span><span class="t" id="t73" style="left:150.40px;top:157.40px;font-size:12px;line-height:18px;color:#2B5F9E;font-weight:normal;transform:scaleX(0.8769);">テーブルの編集</span><span class="t" id="t74" style="left:39.60px;top:176.00px;font-size:12px;line-height:18px;color:#222;font-weight:normal;transform:scaleX(1.0605);">商品ID</span><span class="t" id="t75" style="left:39.80px;top:194.00px;font-size:12px;line-height:18px;color:#222;font-weight:normal;transform:scaleX(1.0271);">商品名</span><span class="t" id="t76" style="left:39.80px;top:212.00px;font-size:12px;line-height:18px;color:#222;font-weight:normal;transform:scaleX(1.0140);">単価</span><span class="t" id="t77" style="left:22.40px;top:230.00px;font-size:12px;line-height:18px;color:#444;font-weight:normal;transform:scaleX(0.8882);">売上データ</span><span class="t" id="t78" style="left:150.40px;top:230.00px;font-size:12px;line-height:18px;color:#2B5F9E;font-weight:normal;transform:scaleX(0.8769);">テーブルの編集</span><span class="t" id="t79" style="left:39.60px;top:248.50px;font-size:12px;line-height:18px;color:#222;font-weight:normal;transform:scaleX(1.1486);">ID</span><span class="t" id="t80" style="left:39.80px;top:267.00px;font-size:12px;line-height:18px;color:#222;font-weight:normal;transform:scaleX(1.0419);">注文日</span><span class="t" id="t81" style="left:40.60px;top:285.00px;font-size:12px;line-height:18px;color:#222;font-weight:normal;transform:scaleX(1.0326);">顧客ID</span><span class="t" id="t82" style="left:39.60px;top:303.00px;font-size:12px;line-height:18px;color:#222;font-weight:normal;transform:scaleX(1.0605);">商品ID</span><span class="t" id="t83" style="left:40.80px;top:321.00px;font-size:12px;line-height:18px;color:#222;font-weight:normal;transform:scaleX(0.9718);">個数</span></div><div class="a" style="left:853px;top:268px;width:15px;height:333px;background:#F0F0F0;"></div><svg style="left:853px;top:282.5px" width="15" height="9" viewBox="0 0 15 9"><rect x="0" y="0" width="15" height="9" fill="#EAEAEA"/><path d="M0.5 0.5H14.5M0.5 2.5H14.5M0.5 4.5H14.5M0.5 6.5H14.5M0.5 8.5H14.5" stroke="#CFCFCF" stroke-dasharray="1 1"/></svg><div class="a" style="left:853px;top:268px;width:15px;height:15px;background:#fff;border:1px solid #A8A8A8"></div><svg style="left:857px;top:273.5px" width="7" height="4" viewBox="0 0 7 4"><path d="M0 4H7L3.5 0Z" fill="#555"/></svg><div class="a" style="left:853px;top:291px;width:15px;height:295px;background:#fff;border:1px solid #A8A8A8"></div><div class="a" style="left:853px;top:585.5px;width:15px;height:15.5px;background:#fff;border:1px solid #A8A8A8"></div><svg style="left:857px;top:592px" width="7.2" height="4.2" viewBox="0 0 7.2 4.2"><path d="M0 0H7.2L3.6 4.2Z" fill="#666"/></svg><div class="a" style="left:0px;top:611px;width:884px;height:22px;background:#F1F1F1;border-top:1px solid #CDCDCD"></div><div class="a" style="left:795px;top:612px;width:38px;height:21px;background:#C6C6C6;"></div><svg style="left:769px;top:615px" width="14" height="13" viewBox="0 0 14 13"><rect x="0.6" y="0.6" width="12.8" height="11.8" fill="#fff" stroke="#6A6A6A" stroke-width="1.2"/><rect x="0" y="0" width="14" height="3.2" fill="#6A6A6A"/><path d="M2.6 6.6H5M2.6 9.7H5" stroke="#6A6A6A" stroke-width="1"/><path d="M6.4 6.6H12M6.4 9.7H12" stroke="#6A6A6A" stroke-width="1.7"/></svg><svg style="left:808px;top:615.5px" width="12" height="13" viewBox="0 0 12 13"><path d="M0.2 0.8H11.8M0.2 11.9H11.8M2.3 0.8V11.9M9.8 0.8V11.9M0.2 6.3H2.3M9.8 6.3H11.8" stroke="#6A6A6A" stroke-width="1.2" fill="none"/><rect x="4" y="3.6" width="5.8" height="1.7" fill="#6A6A6A"/><rect x="4" y="7.3" width="5.8" height="1.7" fill="#6A6A6A"/></svg><svg style="left:845px;top:615px" width="14.5" height="13.5" viewBox="0 0 14.5 13.5"><path d="M0.7 0.9V7.4H6Z" fill="none" stroke="#6A6A6A" stroke-width="1.1"/><path d="M2.2 4.2V6H3.7Z" fill="#6A6A6A"/><path d="M7.4 6.6L12.6 1.2" stroke="#6A6A6A" stroke-width="2.3"/><path d="M6 8L6.5 5.9L8.1 7.4Z" fill="#6A6A6A"/><rect x="1.3" y="9.4" width="12.4" height="3.4" fill="none" stroke="#6A6A6A" stroke-width="1.1"/><path d="M3.8 9.4V10.9M6.3 9.4V10.9M8.8 9.4V10.9M11.3 9.4V10.9" stroke="#6A6A6A" stroke-width="0.9"/></svg><div class="a" style="left:0px;top:0px;width:1px;height:634px;background:#A4373A;"></div><div class="a" style="left:883px;top:0px;width:1px;height:634px;background:#A4373A;"></div><div class="a" style="left:0px;top:633px;width:884px;height:1px;background:#A9474A;"></div><span class="t" id="t0" style="left:152.80px;top:7.00px;font-size:13px;line-height:19px;color:#fff;font-weight:normal;transform:scaleX(1.0059);">Database1 : </span><span class="t" id="t1" style="left:227.60px;top:7.50px;font-size:13px;line-height:19px;color:#fff;font-weight:normal;transform:scaleX(0.7484);">データベース- </span><span class="t" id="t2" style="left:294.60px;top:7.00px;font-size:13px;line-height:19px;color:#fff;font-weight:normal;transform:scaleX(0.9742);">C:¥Users</span><span class="t" id="t3" style="left:347.00px;top:3.90px;font-size:13px;line-height:19px;color:#fff;font-weight:normal;transform:scaleX(0.9171);font-family:"Noto Sans CJK JP",sans-serif;">…</span><span class="t" id="t4" style="left:600.40px;top:7.00px;font-size:13px;line-height:19px;color:#fff;font-weight:normal;transform:scaleX(0.9668);">Yoshie Kohama</span><span class="t" id="t5" style="left:719.40px;top:4.90px;font-size:15px;line-height:21px;color:#fff;font-weight:normal;transform:scaleX(0.6527);">?</span><span class="t" id="t6" style="left:402.00px;top:9.90px;font-size:12px;line-height:18px;color:#E3BFC0;font-weight:normal;transform:scaleX(0.7852);">フォーム レイアウト ツール</span><span class="t" id="t7" style="left:12.60px;top:42.40px;font-size:12px;line-height:18px;color:#fff;font-weight:normal;transform:scaleX(0.7222);">ファイル</span><span class="t" id="t8" style="left:74.40px;top:42.90px;font-size:12px;line-height:18px;color:#fff;font-weight:normal;transform:scaleX(0.8651);">ホーム</span><span class="t" id="t9" style="left:133.80px;top:42.40px;font-size:12px;line-height:18px;color:#fff;font-weight:normal;transform:scaleX(0.9805);">作成</span><span class="t" id="t10" style="left:186.60px;top:42.40px;font-size:12px;line-height:18px;color:#fff;font-weight:normal;transform:scaleX(0.8985);">外部データ</span><span class="t" id="t11" style="left:266.80px;top:42.40px;font-size:12px;line-height:18px;color:#fff;font-weight:normal;transform:scaleX(0.8164);">データベース ツール</span><span class="t" id="t12" style="left:388.40px;top:42.40px;font-size:12px;line-height:18px;color:#A4373A;font-weight:normal;transform:scaleX(0.8133);">デザイン</span><span class="t" id="t13" style="left:455.20px;top:42.40px;font-size:12px;line-height:18px;color:#fff;font-weight:normal;transform:scaleX(1.0540);">配置</span><span class="t" id="t14" style="left:507.40px;top:42.40px;font-size:12px;line-height:18px;color:#fff;font-weight:normal;transform:scaleX(1.0575);">書式</span><span class="t" id="t15" style="left:578.20px;top:42.40px;font-size:12px;line-height:18px;color:#EED6D7;font-weight:normal;transform:scaleX(0.8395);">実行したい作業を入力してください</span><span class="t" id="t16" style="left:14.00px;top:107.00px;font-size:12px;line-height:18px;color:#444;font-weight:normal;transform:scaleX(1.0870);">表示</span><span class="t" id="t17" style="left:14.00px;top:142.40px;font-size:12px;line-height:18px;color:#666;font-weight:normal;transform:scaleX(1.0870);">表示</span><span class="t" id="t18" style="left:62.00px;top:107.00px;font-size:12px;line-height:18px;color:#444;font-weight:normal;transform:scaleX(0.7941);">テーマ</span><span class="t" id="t19" style="left:119.00px;top:81.00px;font-size:12px;line-height:18px;color:#444;font-weight:normal;transform:scaleX(1.0559);">配色</span><span class="t" id="t20" style="left:120.00px;top:111.50px;font-size:12px;line-height:18px;color:#444;font-weight:normal;transform:scaleX(0.6948);">フォント</span><span class="t" id="t21" style="left:97.00px;top:142.00px;font-size:12px;line-height:18px;color:#666;font-weight:normal;transform:scaleX(0.7582);">テーマ</span><span class="t" id="t22" style="left:362.00px;top:143.00px;font-size:12px;line-height:18px;color:#666;font-weight:normal;transform:scaleX(0.7788);">コントロール</span><span class="t" id="t23" style="left:564.40px;top:107.00px;font-size:12px;line-height:18px;color:#444;font-weight:normal;transform:scaleX(0.7698);">イメージ</span><span class="t" id="t24" style="left:560.40px;top:120.40px;font-size:12px;line-height:18px;color:#444;font-weight:normal;transform:scaleX(0.8833);">の挿入</span><span class="t" id="t25" style="left:637.40px;top:74.10px;font-size:12px;line-height:18px;color:#444;font-weight:normal;transform:scaleX(0.8608);">ロゴ</span><span class="t" id="t26" style="left:636.80px;top:97.50px;font-size:12px;line-height:18px;color:#444;font-weight:normal;transform:scaleX(0.7525);">タイトル</span><span class="t" id="t27" style="left:637.20px;top:119.00px;font-size:12px;line-height:18px;color:#444;font-weight:normal;transform:scaleX(0.9520);">日付と時刻</span><span class="t" id="t28" style="left:620.00px;top:143.00px;font-size:12px;line-height:18px;color:#666;font-weight:normal;transform:scaleX(0.7454);">ヘッダー/フッター</span><span class="t" id="t29" style="left:712.00px;top:107.20px;font-size:12px;line-height:18px;color:#444;font-weight:normal;transform:scaleX(0.8239);">既存のフィールド</span><span class="t" id="t30" style="left:733.20px;top:121.40px;font-size:12px;line-height:18px;color:#444;font-weight:normal;transform:scaleX(0.9916);">の追加</span><span class="t" id="t31" style="left:793.00px;top:107.70px;font-size:12px;line-height:18px;color:#444;font-weight:normal;transform:scaleX(0.8075);">プロパティ</span><span class="t" id="t32" style="left:801.00px;top:121.40px;font-size:12px;line-height:18px;color:#444;font-weight:normal;transform:scaleX(0.8485);">シート</span><span class="t" id="t33" style="left:759.60px;top:142.30px;font-size:12px;line-height:18px;color:#666;font-weight:normal;transform:scaleX(0.8446);">ツール</span><span class="t" id="t34" style="left:9.00px;top:162.60px;font-size:21px;line-height:27px;color:#A4373A;font-weight:normal;transform:scaleX(0.8559);font-weight:350;">すべての </span><span class="t" id="t35" style="left:85.00px;top:161.90px;font-size:22px;line-height:28px;color:#A4373A;font-weight:normal;transform:scaleX(0.9886);">Access...</span><span class="t" id="t36" style="left:9.40px;top:193.00px;font-size:12px;line-height:18px;color:#222;font-weight:normal;transform:scaleX(1.0355);">検索...</span><span class="t" id="t37" style="left:13.00px;top:214.00px;font-size:12px;line-height:18px;color:#444;font-weight:bold;transform:scaleX(0.9130);">テーブル</span><span class="t" id="t38" style="left:14.00px;top:329.00px;font-size:12px;line-height:18px;color:#444;font-weight:bold;transform:scaleX(0.7576);">クエリ</span><span class="t" id="t39" style="left:13.00px;top:466.50px;font-size:12px;line-height:18px;color:#444;font-weight:bold;transform:scaleX(0.8374);">フォーム</span><span class="t" id="t40" style="left:44.00px;top:234.50px;font-size:12px;line-height:18px;color:#505050;font-weight:normal;transform:scaleX(1.0227);">Address</span><span class="t" id="t41" style="left:44.00px;top:259.40px;font-size:12px;line-height:18px;color:#505050;font-weight:normal;transform:scaleX(0.8241);">顧客マスター</span><span class="t" id="t42" style="left:43.00px;top:283.60px;font-size:12px;line-height:18px;color:#505050;font-weight:normal;transform:scaleX(0.8383);">商品マスター</span><span class="t" id="t43" style="left:43.00px;top:307.00px;font-size:12px;line-height:18px;color:#505050;font-weight:normal;transform:scaleX(0.8882);">売上データ</span><span class="t" id="t44" style="left:44.00px;top:349.00px;font-size:12px;line-height:18px;color:#505050;font-weight:normal;transform:scaleX(0.8114);">売上データ クエリのクロス集計</span><span class="t" id="t45" style="left:44.00px;top:373.60px;font-size:12px;line-height:18px;color:#505050;font-weight:normal;transform:scaleX(0.7918);">顧客マスター クエリ</span><span class="t" id="t46" style="left:44.00px;top:397.60px;font-size:12px;line-height:18px;color:#505050;font-weight:normal;transform:scaleX(0.8310);">受注のなかった顧客リスト</span><span class="t" id="t47" style="left:44.00px;top:421.00px;font-size:12px;line-height:18px;color:#505050;font-weight:normal;transform:scaleX(0.7528);">性別リストクエリ</span><span class="t" id="t48" style="left:44.00px;top:445.00px;font-size:12px;line-height:18px;color:#505050;font-weight:normal;transform:scaleX(0.8204);">売上データ クエリ</span><span class="t" id="t49" style="left:44.00px;top:487.00px;font-size:12px;line-height:18px;color:#505050;font-weight:normal;transform:scaleX(0.8241);">顧客マスター</span><span class="t" id="t50" style="left:44.00px;top:511.00px;font-size:12px;line-height:18px;color:#505050;font-weight:normal;transform:scaleX(0.8153);">売上データ サブフォーム</span><span class="t" id="t51" style="left:244.00px;top:163.50px;font-size:12px;line-height:18px;color:#A4373A;font-weight:bold;transform:scaleX(0.8868);">フォーム1</span><span class="t" id="t52" style="left:218.00px;top:594.00px;font-size:12px;line-height:18px;color:#555;font-weight:normal;transform:scaleX(0.8233);">レコード:</span><span class="t" id="t53" style="left:297.00px;top:592.00px;font-size:13px;line-height:19px;color:#222;font-weight:normal;transform:scaleX(1.0833);">1 / 1</span><span class="t" id="t54" style="left:432.20px;top:593.50px;font-size:12px;line-height:18px;color:#9a9a9a;font-weight:normal;transform:scaleX(0.7557);">フィルターなし</span><span class="t" id="t55" style="left:514.00px;top:594.00px;font-size:12px;line-height:18px;color:#222;font-weight:normal;transform:scaleX(1.0665);">検索</span><span class="t" id="t56" style="left:7.80px;top:614.10px;font-size:12px;line-height:18px;color:#444;font-weight:normal;transform:scaleX(0.7506);">レイアウト ビュー</span><span class="t" id="t57" style="left:632.00px;top:174.00px;font-size:21px;line-height:27px;color:#A4373A;font-weight:normal;transform:scaleX(0.7336);font-weight:350;">フィールド リスト</span><span class="t" id="t58" style="left:661.00px;top:207.00px;font-size:12px;line-height:18px;color:#2B5F9E;font-weight:normal;transform:scaleX(0.8194);">現在のレコード ソースのフィールドのみを表示</span><span class="t" id="t59" style="left:660.00px;top:221.60px;font-size:12px;line-height:18px;color:#2B5F9E;font-weight:normal;transform:scaleX(0.8660);">する</span><span class="t" id="t60" style="left:630.00px;top:245.20px;font-size:12px;line-height:18px;color:#333;font-weight:normal;transform:scaleX(0.8512);">他のテーブルで利用可能なフィールド:</span></div></body></html>
